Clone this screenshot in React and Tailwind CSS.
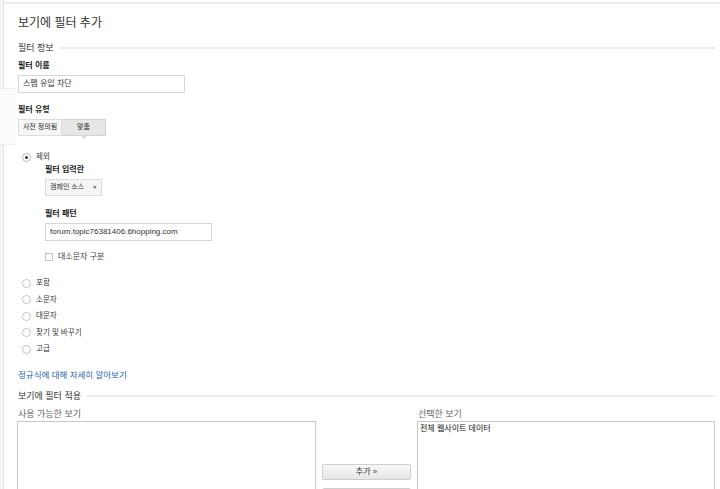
import React from 'react';

const font = { fontFamily: '"Liberation Sans", "Noto Sans CJK KR", sans-serif' };

function Radio({ label, checked }) {
  return (
    <div className="flex items-center h-[16.5px]">
      <span className="w-[9px] h-[9px] ml-[4px] rounded-full border border-[#c4c4c4] bg-white flex items-center justify-center">
        {checked && <span className="w-[3px] h-[3px] rounded-full bg-[#333]" />}
      </span>
      <span className="ml-[5px] text-[7.5px] leading-[12px] text-[#333]">{label}</span>
    </div>
  );
}

function SectionHeader({ title, className }) {
  return (
    <div className={`flex items-center h-[12px] ${className}`}>
      <span className="text-[9px] leading-[12px] text-[#333]">{title}</span>
      <span className="flex-1 h-[2px] bg-[#ececec] ml-[5px]" />
    </div>
  );
}

function Label({ children, className }) {
  return <div className={`h-[12px] text-[8px] leading-[12px] font-bold text-[#222] ${className}`}>{children}</div>;
}

export default function App() {
  return (
    <div className="w-[720px] h-[489px] overflow-hidden bg-white flex relative" style={font}>
      {/* left edge of the side nav */}
      <div className="w-[4px] bg-[#f5f5f5] border-r border-[#e2e2e2]" />
      <div className="absolute left-0 top-[88px] w-[15px] h-[57px] bg-[#fbfbfb] border-y border-[#efefef]" />

      <div className="flex-1 mt-[2px] border-t-2 border-[#ececec] pl-[14px] pr-[5px] relative">
        <h1 className="mt-[11px] h-[16px] text-[12px] leading-[16px] text-[#333]">보기에 필터 추가</h1>

        <SectionHeader title="필터 정보" className="mt-[11px]" />

        <Label className="mt-[6px]">필터 이름</Label>
        <div className="mt-[3px] w-[167px] h-[18px] border border-[#d6d6d6] flex items-center px-[4px] text-[8px] text-[#333]">
          스팸 유입 차단
        </div>

        <Label className="mt-[11px]">필터 유형</Label>
        <div className="mt-[3px] flex h-[17px] relative">
          <div className="w-[44px] h-full border border-[#dcdcdc] bg-[#f7f7f7] flex items-center justify-center text-[7px] text-[#222]">
            사전 정의됨
          </div>
          <div className="w-[44px] h-full border border-l-0 border-[#d2d2d2] bg-[#e6e6e6] flex items-center justify-center text-[7px] text-[#222] relative">
            맞춤
            <span className="absolute left-1/2 -translate-x-1/2 top-full w-0 h-0 border-l-[4px] border-r-[4px] border-t-[4px] border-l-transparent border-r-transparent border-t-[#d8d8d8]" />
          </div>
        </div>

        <div className="mt-[15px] h-[12px] flex items-center">
          <span className="w-[9px] h-[9px] ml-[4px] rounded-full border border-[#b8b8b8] bg-white flex items-center justify-center">
            <span className="w-[3px] h-[3px] rounded-full bg-[#333]" />
          </span>
          <span className="ml-[5px] text-[7.5px] leading-[12px] text-[#333]">제외</span>
        </div>

        <div className="pl-[27px]">
          <Label className="mt-[1px]">필터 입력란</Label>
          <div className="mt-[3px] w-[57px] h-[17px] border border-[#dcdcdc] bg-[#f5f5f5] flex items-center pl-[4px] text-[7px] text-[#333]">
            <span>캠페인 소스</span>
            <span className="ml-[8px] text-[5px] text-[#555]">▼</span>
          </div>

          <Label className="mt-[12px]">필터 패턴</Label>
          <div className="mt-[3px] w-[167px] h-[18px] border border-[#d6d6d6] flex items-center px-[4px] text-[8px] text-[#333]">
            forum.topic76381406.6hopping.com
          </div>

          <div className="mt-[10px] h-[12px] flex items-center">
            <span className="w-[8px] h-[8px] border border-[#c4c4c4] bg-white" />
            <span className="ml-[5px] text-[8px] leading-[12px] text-[#444]">대소문자 구분</span>
          </div>
        </div>

        <div className="mt-[12px]">
          <Radio label="포함" />
          <Radio label="소문자" />
          <Radio label="대문자" />
          <Radio label="찾기 및 바꾸기" />
          <Radio label="고급" />
        </div>

        <a className="block mt-[11.5px] h-[12px] text-[8.5px] leading-[12px] text-[#1a64b4]">
          정규식에 대해 자세히 알아보기
        </a>

        <SectionHeader title="보기에 필터 적용" className="mt-[9px]" />

        <div className="mt-[6px] -ml-[1px] grid grid-cols-[299px_89px_298px] gap-x-[6px]">
          <div>
            <div className="h-[12px] text-[9px] leading-[12px] text-[#666] pl-[1px]">사용 가능한 보기</div>
            <div className="mt-[1px] h-[120px] border border-[#c8c8c8] bg-white" />
          </div>
          <div className="pt-[49px]">
            <button className="w-full h-[16px] border border-[#cfcfcf] rounded-[2px] bg-gradient-to-b from-[#f8f8f8] to-[#e6e6e6] text-[8px] text-[#333] leading-none">
              추가 »
            </button>
            <button className="mt-[7px] w-full h-[16px] border border-[#cfcfcf] rounded-[2px] bg-gradient-to-b from-[#f8f8f8] to-[#e6e6e6]" />
          </div>
          <div>
            <div className="h-[12px] text-[9px] leading-[12px] text-[#666] pl-[1px]">선택한 보기</div>
            <div className="mt-[1px] h-[120px] border border-[#c8c8c8] bg-white px-[2px] pt-[1px] text-[8px] leading-[11px] text-[#111]">
              전체 웹사이트 데이터
            </div>
          </div>
        </div>
      </div>
    </div>
  );
}
